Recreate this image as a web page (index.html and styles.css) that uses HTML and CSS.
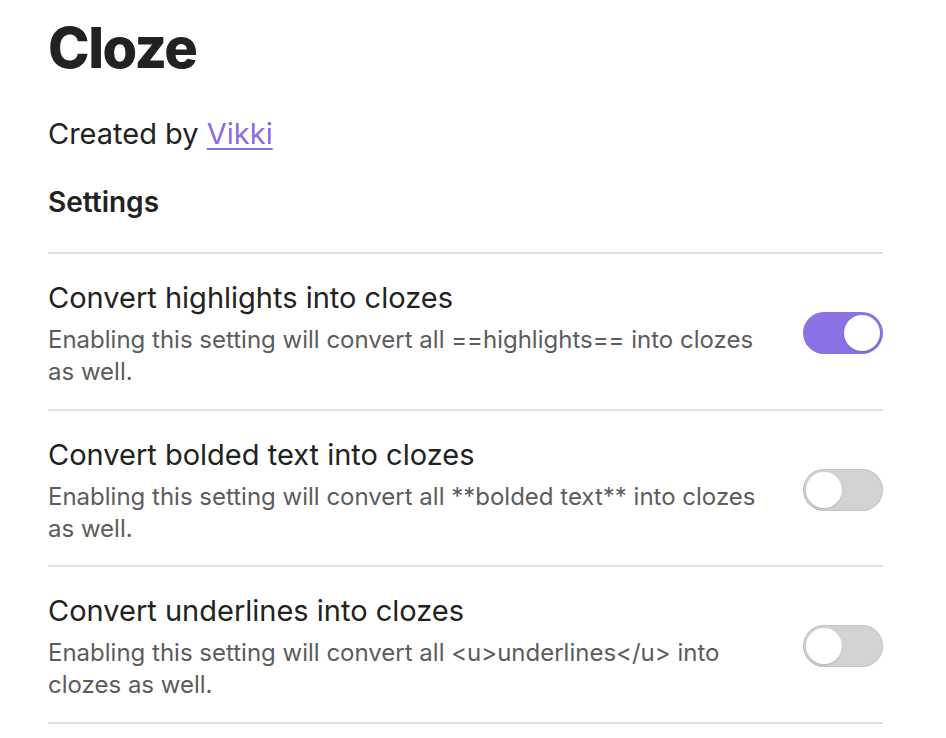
FILE: index.html
```html
<!DOCTYPE html>
<html>
<head>
<meta charset="utf-8">
<link rel="stylesheet" href="styles.css">
</head>
<body>
<div class="page">
  <h1 class="title">Cloze</h1>
  <p class="credit">Created by <a href="#" class="link">Vikki</a></p>
  <div class="heading">Settings</div>
  <div class="list">
    <div class="item">
      <div class="info">
        <div class="name">Convert highlights into clozes</div>
        <div class="desc">Enabling this setting will convert all ==highlights== into clozes as well.</div>
      </div>
      <div class="control"><div class="toggle on"><span class="knob"></span></div></div>
    </div>
    <div class="item">
      <div class="info">
        <div class="name">Convert bolded text into clozes</div>
        <div class="desc">Enabling this setting will convert all **bolded text** into clozes as well.</div>
      </div>
      <div class="control"><div class="toggle"><span class="knob"></span></div></div>
    </div>
    <div class="item">
      <div class="info">
        <div class="name">Convert underlines into clozes</div>
        <div class="desc">Enabling this setting will convert all &lt;u&gt;underlines&lt;/u&gt; into clozes as well.</div>
      </div>
      <div class="control"><div class="toggle"><span class="knob"></span></div></div>
    </div>
  </div>
</div>
</body>
</html>
```
FILE: styles.css
```css
html, body {
  margin: 0;
  padding: 0;
  background: #ffffff;
}
body {
  font-family: Inter, "Noto Sans", sans-serif;
  color: #222222;
}
.page {
  padding: 14px 63px 0 48px;
}
.title {
  margin: 0;
  font-size: 56px;
  font-weight: 800;
  line-height: 68px;
  letter-spacing: -1.5px;
  color: #222222;
}
.credit {
  margin: 32px 0 0 0;
  font-size: 29px;
  line-height: 40px;
  color: #222222;
}
.link {
  color: #8a6ce6;
  text-decoration: underline;
  text-decoration-thickness: 2px;
  text-underline-offset: 4px;
}
.heading {
  margin-top: 28px;
  font-size: 28px;
  font-weight: 600;
  line-height: 40px;
  padding-bottom: 30px;
}
.list {
  border-bottom: 2px solid #e0e0e0;
}
.item {
  display: flex;
  align-items: center;
  border-top: 2px solid #e0e0e0;
  padding: 24px 0 20.5px 0;
}
.info {
  flex: 1 1 auto;
  margin-right: 40px;
}
.name {
  font-size: 29px;
  line-height: 40px;
  color: #222222;
}
.desc {
  margin-top: 6px;
  font-size: 24px;
  line-height: 32px;
  color: #5c5c5c;
}
.control {
  flex: 0 0 auto;
  display: flex;
  justify-content: flex-end;
}
.toggle {
  width: 80px;
  height: 42px;
  border-radius: 21px;
  background: #d3d3d3;
  box-shadow: inset 0 0 0 1px #c4c4c4;
  display: flex;
  align-items: center;
  padding: 0 3px;
  box-sizing: border-box;
}
.toggle .knob {
  width: 36px;
  height: 36px;
  border-radius: 50%;
  background: #ffffff;
  box-shadow: 0 1px 2px rgba(0,0,0,0.15);
}
.toggle.on {
  background: #8b72e4;
  box-shadow: none;
  justify-content: flex-end;
}
```
